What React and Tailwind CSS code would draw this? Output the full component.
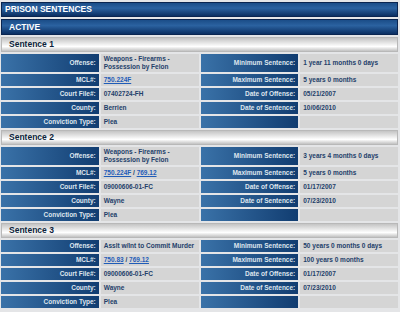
import React from 'react'

const sentences = [
  {
    title: 'Sentence 1',
    offense: ['Weapons - Firearms -', 'Possession by Felon'],
    mcl: ['750.224F'],
    courtFile: '07402724-FH',
    county: 'Berrien',
    convictionType: 'Plea',
    minimum: '1 year 11 months 0 days',
    maximum: '5 years 0 months',
    dateOfOffense: '05/21/2007',
    dateOfSentence: '10/06/2010',
  },
  {
    title: 'Sentence 2',
    offense: ['Weapons - Firearms -', 'Possession by Felon'],
    mcl: ['750.224F', '769.12'],
    courtFile: '09000606-01-FC',
    county: 'Wayne',
    convictionType: 'Plea',
    minimum: '3 years 4 months 0 days',
    maximum: '5 years 0 months',
    dateOfOffense: '01/17/2007',
    dateOfSentence: '07/23/2010',
  },
  {
    title: 'Sentence 3',
    offense: ['Asslt w/Int to Commit Murder'],
    mcl: ['750.83', '769.12'],
    courtFile: '09000606-01-FC',
    county: 'Wayne',
    convictionType: 'Plea',
    minimum: '50 years 0 months 0 days',
    maximum: '100 years 0 months',
    dateOfOffense: '01/17/2007',
    dateOfSentence: '07/23/2010',
  },
]

const Label = ({ children }) => (
  <div className="flex items-center justify-end bg-gradient-to-r from-[#3a72a8] to-[#113d71] pr-[3px] text-[6.5px] font-bold leading-[8px] text-[#dfe6ee]">
    {children}
  </div>
)

const Value = ({ children }) => (
  <div className="flex min-h-[12px] flex-col justify-center bg-[#d5d5d5] py-[1px] pl-[3px] text-[6.5px] font-bold leading-[8px] text-[#23406a]">
    {children}
  </div>
)

const McLinks = ({ codes }) => (
  <span>
    {codes.map((code, i) => (
      <React.Fragment key={code}>
        {i > 0 && ' / '}
        <a href="#" className="text-[#1f5cb8] underline">{code}</a>
      </React.Fragment>
    ))}
  </span>
)

const SentenceBlock = ({ s }) => (
  <div className="flex flex-col gap-[2px]">
    <div className="flex h-[15px] items-center border border-[#b8b8b8] bg-gradient-to-b from-[#c4c4c4] via-[#ffffff] via-65% to-[#c2c2c2] pl-[7px] text-[8.5px] font-bold text-[#0c1f3a]">
      {s.title}
    </div>
    <div className="grid grid-cols-4 gap-[2px]">
      <Label>Offense:</Label>
      <Value>
        {s.offense.map((line) => (
          <span key={line}>{line}</span>
        ))}
      </Value>
      <Label>Minimum Sentence:</Label>
      <Value>{s.minimum}</Value>

      <Label>MCL#:</Label>
      <Value><McLinks codes={s.mcl} /></Value>
      <Label>Maximum Sentence:</Label>
      <Value>{s.maximum}</Value>

      <Label>Court File#:</Label>
      <Value>{s.courtFile}</Value>
      <Label>Date of Offense:</Label>
      <Value>{s.dateOfOffense}</Value>

      <Label>County:</Label>
      <Value>{s.county}</Value>
      <Label>Date of Sentence:</Label>
      <Value>{s.dateOfSentence}</Value>

      <Label>Conviction Type:</Label>
      <Value>{s.convictionType}</Value>
      <Label></Label>
      <Value></Value>
    </div>
  </div>
)

export default function App() {
  return (
    <div
      className="h-[312px] w-[400px] overflow-hidden bg-[#e4e5e7] px-[1px] pt-[2px]"
      style={{ fontFamily: '"Liberation Sans", Arial, sans-serif' }}
    >
      <div className="flex w-[397px] flex-col gap-[2px]">
        <div className="flex h-[15px] items-center border border-[#0a2550] bg-gradient-to-b from-[#1b4d88] via-[#2b62a0] via-40% to-[#0b2f62] pl-[3px] text-[8.5px] font-bold text-white">
          PRISON SENTENCES
        </div>
        <div className="flex h-[16px] items-center border border-[#0a2550] bg-gradient-to-b from-[#1b4d88] via-[#2b62a0] via-40% to-[#0b2f62] pl-[7px] text-[8.5px] font-bold text-white">
          ACTIVE
        </div>
        {sentences.map((s) => (
          <SentenceBlock key={s.title} s={s} />
        ))}
      </div>
    </div>
  )
}
